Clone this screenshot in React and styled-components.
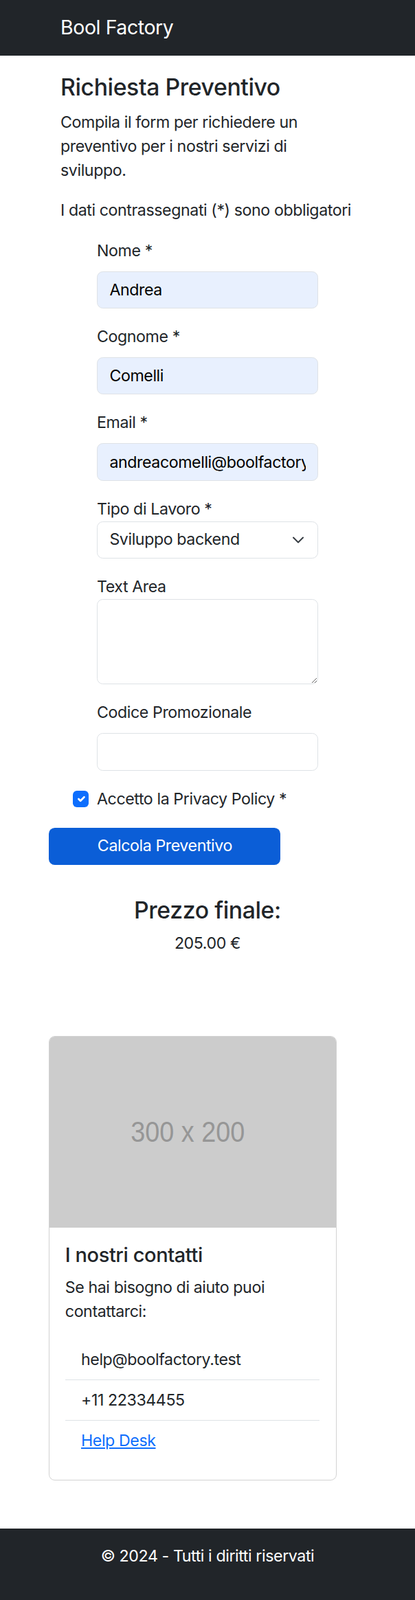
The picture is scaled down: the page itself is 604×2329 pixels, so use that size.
import React from 'react';
import styled, { createGlobalStyle } from 'styled-components';

const GlobalStyle = createGlobalStyle`
  * { box-sizing: border-box; }
  body {
    margin: 0;
    font-family: Inter, "Noto Sans", sans-serif;
    font-size: 23.2px;
    line-height: 35px;
    letter-spacing: -0.018em;
    color: #212529;
    background: #fff;
  }
  input, select, textarea, button {
    letter-spacing: inherit;
  }
`;

const Navbar = styled.nav`
  height: 81px;
  background-color: #212529;
  display: flex;
  align-items: center;
  padding: 0 88px;
`;

const Brand = styled.a`
  color: #fff;
  font-size: 28.5px;
  line-height: 1.5;
  text-decoration: none;
`;

const Container = styled.main`
  padding: 0 88px;
`;

const Title = styled.h1`
  font-size: 33.8px;
  font-weight: 500;
  line-height: 1.2;
  margin: 26px 0 13px;
`;

const Text = styled.p`
  margin: 0 0 ${(p) => (p.$flush ? '0' : '23.5px')};
`;

const FormCol = styled.form`
  width: 322px;
  margin: 0 auto;
`;

const Field = styled.div`
  margin-bottom: 24px;
`;

const Label = styled.label`
  display: block;
  margin-bottom: ${(p) => (p.$tight ? '0' : '12px')};
`;

const Input = styled.input`
  display: block;
  width: 100%;
  height: 54.4px;
  padding: 8.7px 17.4px;
  font: inherit;
  color: ${(p) => (p.$filled ? '#000' : '#212529')};
  background-color: ${(p) => (p.$filled ? '#e8f0fe' : '#fff')};
  border: 1.45px solid #dee2e6;
  border-radius: 8.7px;
  outline: none;
`;

const TextArea = styled.textarea`
  display: block;
  width: 100%;
  height: 124px;
  padding: 8.7px 17.4px;
  font: inherit;
  border: 1.45px solid #dee2e6;
  border-radius: 8.7px;
  resize: vertical;
  outline: none;
`;

const SelectWrap = styled.div`
  position: relative;
`;

const Select = styled.select`
  display: block;
  width: 100%;
  height: 54.4px;
  padding: 8.7px 50px 8.7px 17.4px;
  font: inherit;
  color: #212529;
  background: #fff;
  border: 1.45px solid #dee2e6;
  border-radius: 8.7px;
  appearance: none;
  outline: none;
`;

const Chevron = styled.svg`
  position: absolute;
  right: 21px;
  top: 50%;
  margin-top: -5px;
  pointer-events: none;
`;

const CheckRow = styled.div`
  display: flex;
  align-items: center;
  gap: 11.6px;
  margin: 0 0 24px -34.8px;
`;

const CheckBox = styled.span`
  width: 23.2px;
  height: 23.2px;
  border-radius: 5.8px;
  background-color: #0d6efd;
  display: flex;
  align-items: center;
  justify-content: center;
`;

const SubmitButton = styled.button`
  display: block;
  width: 337px;
  height: 54.7px;
  margin-left: -69.6px;
  font: inherit;
  color: #fff;
  background-color: #0b5ed7;
  border: none;
  border-radius: 8.7px;
`;

const Result = styled.section`
  margin-top: 46.3px;
  text-align: center;
`;

const SubTitle = styled.h3`
  font-size: 33.8px;
  font-weight: 500;
  line-height: 1.2;
  margin: 0 0 10px;
`;

const Card = styled.div`
  width: 419px;
  margin: 116.6px 0 70.5px -17.4px;
  border: 1.45px solid rgba(0, 0, 0, 0.175);
  border-radius: 8.7px;
  overflow: hidden;
`;

const Placeholder = styled.div`
  height: 278.3px;
  background-color: #cccccc;
  display: flex;
  align-items: center;
  justify-content: center;
  padding-right: 14px;
  color: #969696;
  font-family: "Liberation Sans", Arial, sans-serif;
  font-size: 42px;
  letter-spacing: 0;

  span {
    display: inline-block;
    transform: scaleX(0.9);
  }
`;

const CardBody = styled.div`
  padding: 23.2px 23.2px 27px;
`;

const CardTitle = styled.h5`
  font-size: 29px;
  font-weight: 500;
  line-height: 1.2;
  margin: 0 0 11.6px;
`;

const List = styled.ul`
  list-style: none;
  margin: 0;
  padding: 0;
`;

const Item = styled.li`
  padding: 11.6px 23.2px;
  border-bottom: 1.45px solid #dee2e6;

  &:last-child {
    border-bottom: none;
  }

  a {
    color: #0d6efd;
    text-decoration: underline;
  }
`;

const Footer = styled.footer`
  background-color: #212529;
  color: #fff;
  text-align: center;
  padding: 23.2px 0 0.1px;

  p {
    margin-bottom: 46.4px;
  }
`;

export default function App() {
  return (
    <>
      <GlobalStyle />
      <Navbar>
        <Brand href="#">Bool Factory</Brand>
      </Navbar>
      <Container>
        <Title>Richiesta Preventivo</Title>
        <Text>Compila il form per richiedere un preventivo per i nostri servizi di sviluppo.</Text>
        <Text>I dati contrassegnati (*) sono obbligatori</Text>

        <FormCol onSubmit={(e) => e.preventDefault()}>
          <Field>
            <Label htmlFor="nome">Nome *</Label>
            <Input id="nome" $filled defaultValue="Andrea" />
          </Field>
          <Field>
            <Label htmlFor="cognome">Cognome *</Label>
            <Input id="cognome" $filled defaultValue="Comelli" />
          </Field>
          <Field>
            <Label htmlFor="email">Email *</Label>
            <Input id="email" type="email" $filled defaultValue="andreacomelli@boolfactory.test" />
          </Field>
          <Field>
            <Label $tight htmlFor="lavoro">Tipo di Lavoro *</Label>
            <SelectWrap>
              <Select id="lavoro" defaultValue="backend">
                <option value="backend">Sviluppo backend</option>
                <option value="frontend">Sviluppo frontend</option>
                <option value="analisi">Analisi progettuale</option>
              </Select>
              <Chevron width="16" height="10" viewBox="0 0 16 10">
                <path d="M1 1.5l7 7 7-7" fill="none" stroke="#343a40" strokeWidth="2" strokeLinecap="round" strokeLinejoin="round" />
              </Chevron>
            </SelectWrap>
          </Field>
          <Field>
            <Label $tight htmlFor="note">Text Area</Label>
            <TextArea id="note" />
          </Field>
          <Field>
            <Label htmlFor="promo">Codice Promozionale</Label>
            <Input id="promo" />
          </Field>
          <CheckRow>
            <CheckBox>
              <svg width="18" height="18" viewBox="0 0 20 20">
                <path d="M6 10l3 3 6-6" fill="none" stroke="#fff" strokeWidth="3" strokeLinecap="round" strokeLinejoin="round" />
              </svg>
            </CheckBox>
            <span>Accetto la Privacy Policy *</span>
          </CheckRow>
          <SubmitButton type="submit">Calcola Preventivo</SubmitButton>
        </FormCol>

        <Result>
          <SubTitle>Prezzo finale:</SubTitle>
          <Text $flush>205.00 €</Text>
        </Result>

        <Card>
          <Placeholder>
            <span>300 x 200</span>
          </Placeholder>
          <CardBody>
            <CardTitle>I nostri contatti</CardTitle>
            <Text>Se hai bisogno di aiuto puoi contattarci:</Text>
            <List>
              <Item>help@boolfactory.test</Item>
              <Item>+11 22334455</Item>
              <Item>
                <a href="#">Help Desk</a>
              </Item>
            </List>
          </CardBody>
        </Card>
      </Container>
      <Footer>
        <Text>© 2024 - Tutti i diritti riservati</Text>
      </Footer>
    </>
  );
}
